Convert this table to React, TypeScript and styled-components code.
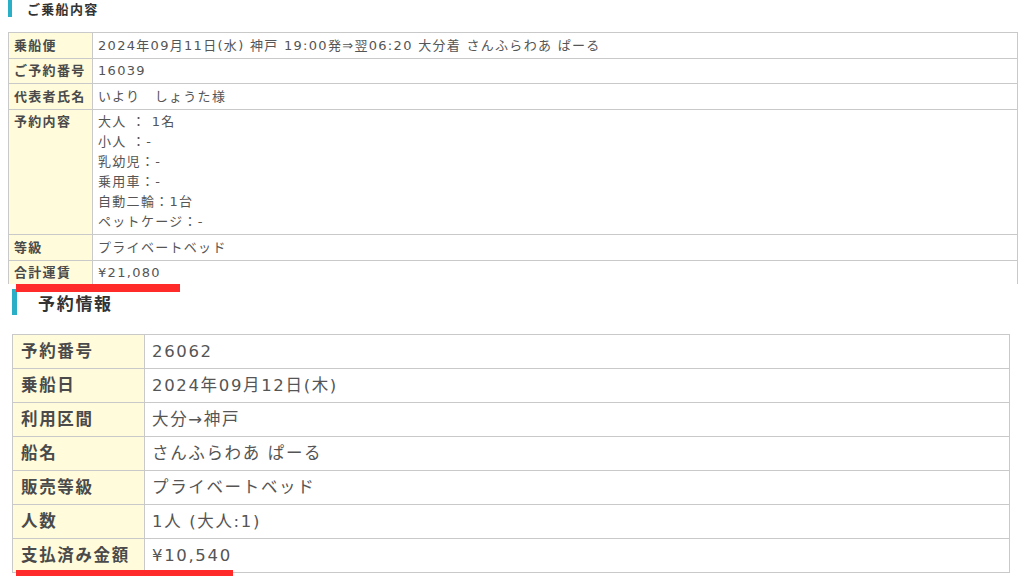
import styled, { createGlobalStyle } from 'styled-components'

type SizeProps = {
  $large?: boolean
}

type RowType = {
  label: string
  value: string[]
}

const GlobalStyle = createGlobalStyle`
  html, body {
    margin: 0;
    padding: 0;
    background: #fff;
  }

  body {
    font-family: 'DejaVu Sans', 'Noto Sans CJK JP', sans-serif;
    color: #555;
  }
`

const Page = styled.div`
  width: 1024px;
  height: 576px;
  overflow: hidden;
  display: flex;
  flex-direction: column;
`

const Shot = styled.section<SizeProps>`
  position: relative;
  height: ${p => (p.$large ? '287px' : '289px')};
  padding: ${p => (p.$large ? '0 14px 0 12px' : '0 6px 0 8px')};
`

const Title = styled.h2<SizeProps>`
  margin: 0;
  display: flex;
  align-items: center;
  height: ${p => (p.$large ? '26px' : '17px')};
  margin-bottom: ${p => (p.$large ? '19px' : '15px')};
  padding-left: ${p => (p.$large ? '21px' : '15px')};
  border-left: ${p => (p.$large ? '5px' : '4px')} solid #2aafc7;
  font-size: ${p => (p.$large ? '17px' : '13px')};
  font-weight: bold;
  letter-spacing: 0.1em;
  color: #333;
`

const TableClip = styled.div<SizeProps>`
  overflow: hidden;
  height: ${p => (p.$large ? 'auto' : '252px')};
`

const InfoTable = styled.table<SizeProps>`
  width: 100%;
  border-collapse: collapse;
  font-size: ${p => (p.$large ? '16.5px' : '13px')};
  letter-spacing: 0.1em;
`

const Label = styled.th<SizeProps>`
  width: ${p => (p.$large ? '123px' : '78px')};
  padding: ${p => (p.$large ? '4px 0 4px 8px' : '2.5px 0 2px 5px')};
  background: #fffbdb;
  border: 1px solid #c9c9c9;
  text-align: left;
  vertical-align: top;
  font-weight: bold;
  color: #4a4a4a;
  white-space: nowrap;
`

const Value = styled.td<SizeProps>`
  padding: ${p => (p.$large ? '4px 7px' : '2.5px 5px 2px')};
  border: 1px solid #c9c9c9;
  vertical-align: top;
  color: #555;
  white-space: nowrap;
`

const Line = styled.div<SizeProps>`
  height: ${p => (p.$large ? '25px' : '20px')};
  line-height: ${p => (p.$large ? '25px' : '20px')};
  overflow: visible;
`

const Marker = styled.span<SizeProps>`
  position: absolute;
  z-index: 2;
  left: 16px;
  height: ${p => (p.$large ? '6px' : '8px')};
  width: ${p => (p.$large ? '217px' : '164px')};
  bottom: ${p => (p.$large ? '0' : 'auto')};
  top: ${p => (p.$large ? 'auto' : '284px')};
  background: #ff2b2b;
`

const boarding: RowType[] = [
  { label: '乗船便', value: ['2024年09月11日(水) 神戸 19:00発⇒翌06:20 大分着 さんふらわあ ぱーる'] },
  { label: 'ご予約番号', value: ['16039'] },
  { label: '代表者氏名', value: ['いより　しょうた様'] },
  {
    label: '予約内容',
    value: ['大人 ： 1名', '小人 ：-', '乳幼児：-', '乗用車：-', '自動二輪：1台', 'ペットケージ：-'],
  },
  { label: '等級', value: ['プライベートベッド'] },
  { label: '合計運賃', value: ['¥21,080'] },
]

const reservation: RowType[] = [
  { label: '予約番号', value: ['26062'] },
  { label: '乗船日', value: ['2024年09月12日(木)'] },
  { label: '利用区間', value: ['大分→神戸'] },
  { label: '船名', value: ['さんふらわあ ぱーる'] },
  { label: '販売等級', value: ['プライベートベッド'] },
  { label: '人数', value: ['1人 (大人:1)'] },
  { label: '支払済み金額', value: ['¥10,540'] },
]

function Section ({ title, rows, large }: { title: string, rows: RowType[], large?: boolean }) {
  return (
    <Shot $large={large}>
      <Title $large={large}>{title}</Title>

      <TableClip $large={large}>
        <InfoTable $large={large}>
          <tbody>
            {rows.map(row => (
              <tr key={row.label}>
                <Label $large={large}>
                  <Line $large={large}>{row.label}</Line>
                </Label>
                <Value $large={large}>
                  {row.value.map(line => (
                    <Line key={line} $large={large}>{line}</Line>
                  ))}
                </Value>
              </tr>
            ))}
          </tbody>
        </InfoTable>
      </TableClip>

      <Marker $large={large} />
    </Shot>
  )
}

export default function App () {
  return (
    <>
      <GlobalStyle />
      <Page>
        <Section title="ご乗船内容" rows={boarding} />
        <Section title="予約情報" rows={reservation} large />
      </Page>
    </>
  )
}
